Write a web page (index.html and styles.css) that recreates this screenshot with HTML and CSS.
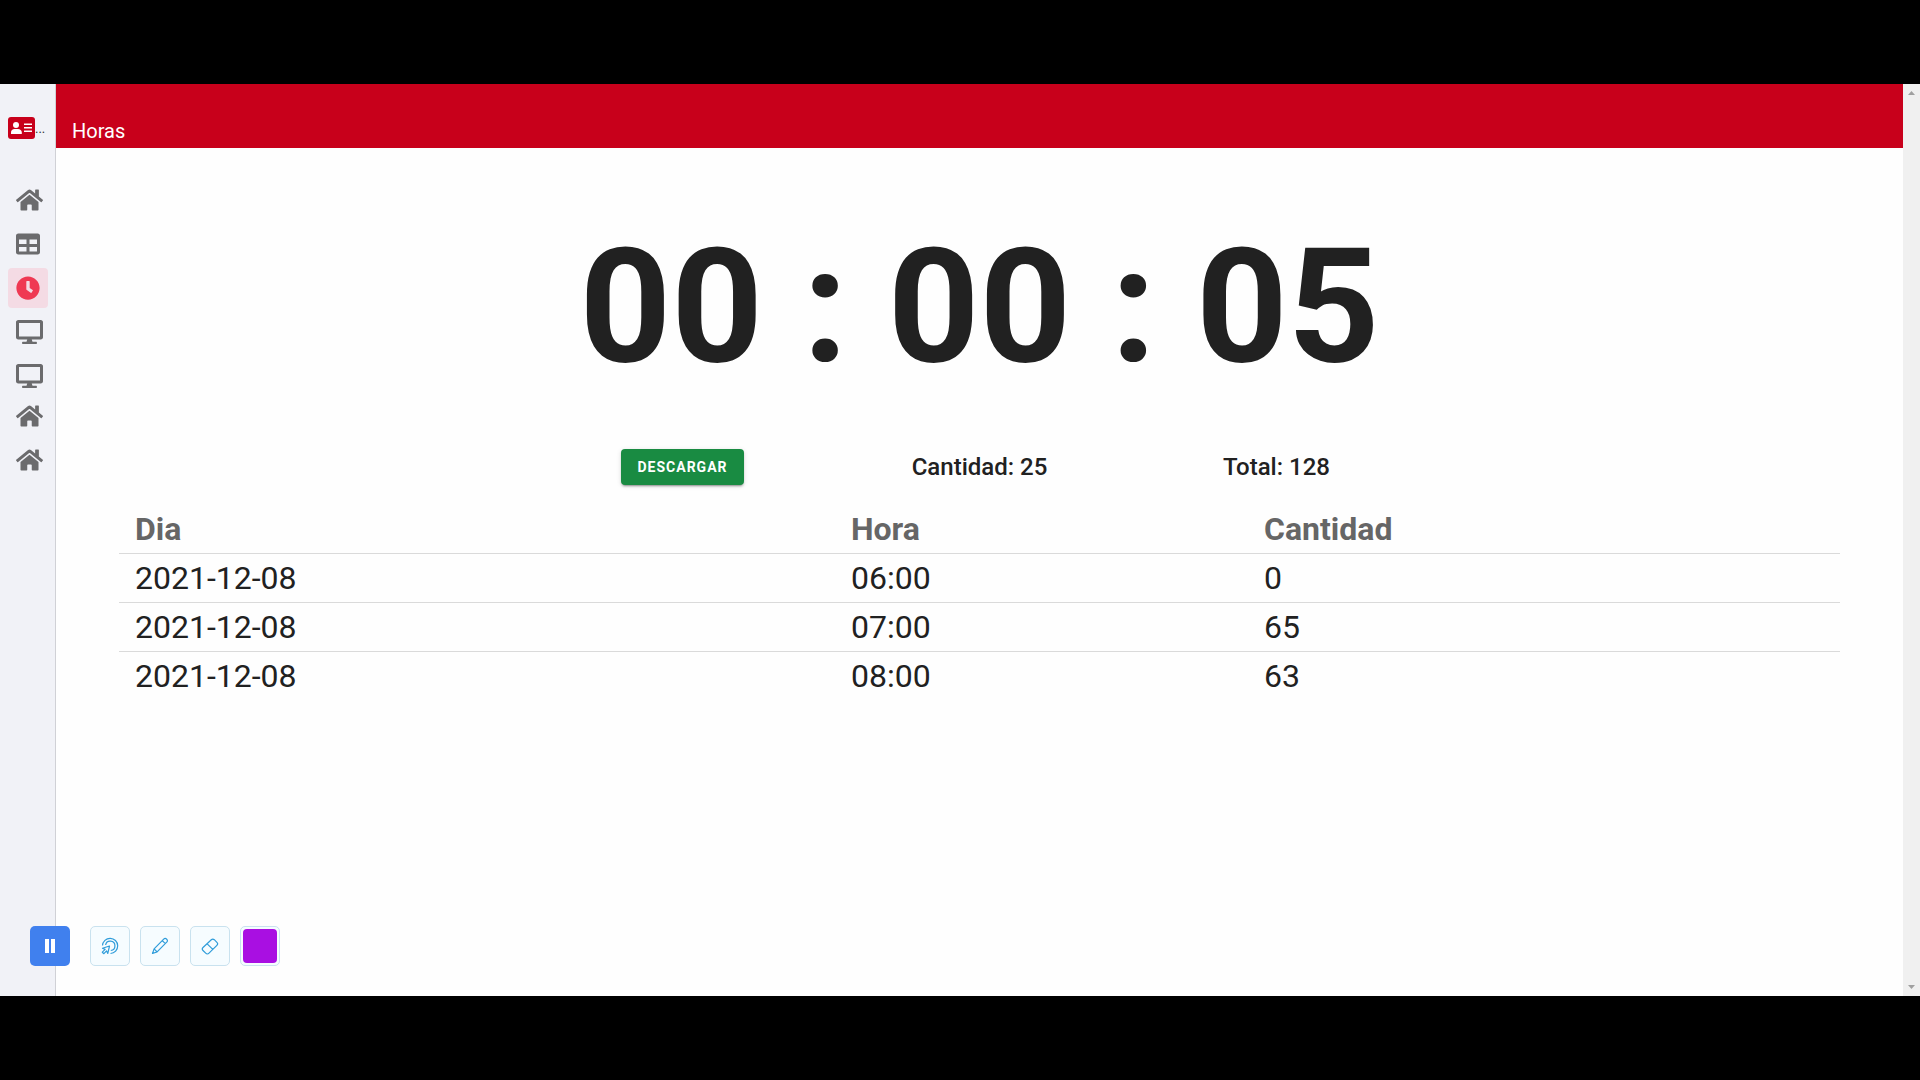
FILE: index.html
```html
<!DOCTYPE html>
<html lang="es">
<head>
<meta charset="utf-8">
<meta name="viewport" content="width=device-width, initial-scale=1">
<title>Horas</title>
<link rel="stylesheet" href="styles.css">
</head>
<body>
<svg class="sprite" aria-hidden="true">
  <symbol id="home" viewBox="0 0 576 512"><path d="M280.37 148.26L96 300.11V464a16 16 0 0 0 16 16l112.06-.29a16 16 0 0 0 15.92-16V368a16 16 0 0 1 16-16h64a16 16 0 0 1 16 16v95.64a16 16 0 0 0 16 16.05L464 480a16 16 0 0 0 16-16V300L295.67 148.26a12.19 12.19 0 0 0-15.3 0zM571.6 251.47L488 182.56V44.05a12 12 0 0 0-12-12h-56a12 12 0 0 0-12 12v72.61L318.47 43a48 48 0 0 0-61 0L4.34 251.47a12 12 0 0 0-1.6 16.9l25.5 31A12 12 0 0 0 45.15 301l235.22-193.74a12.19 12.19 0 0 1 15.3 0L530.9 301a12 12 0 0 0 16.9-1.6l25.5-31a12 12 0 0 0-1.7-16.93z"/></symbol>
  <symbol id="desktop" viewBox="0 0 576 512"><path d="M528 0H48C21.500 0 0 21.500 0 48v320c0 26.500 21.500 48 48 48h192l-16 48h-72c-13.300 0-24 10.700-24 24s10.700 24 24 24h272c13.300 0 24-10.700 24-24s-10.700-24-24-24h-72l-16-48h192c26.500 0 48-21.500 48-48V48c0-26.500-21.500-48-48-48zm-16 352H64V64h448v288z"/></symbol>
  <symbol id="grid" viewBox="0 0 512 512"><path fill-rule="evenodd" d="M464 32H48C21.500 32 0 53.500 0 80v352c0 26.500 21.500 48 48 48h416c26.500 0 48-21.500 48-48V80c0-26.500-21.500-48-48-48zM224 416H64v-96h160v96zm0-160H64v-96h160v96zm224 160H288v-96h160v96zm0-160H288v-96h160v96z"/></symbol>
  <symbol id="clock" viewBox="0 0 512 512"><path d="M256 8C119 8 8 119 8 256s111 248 248 248 248-111 248-248S393 8 256 8zm57.100 350.100L224.900 294c-3.100-2.300-4.900-5.900-4.900-9.700V116c0-6.600 5.400-12 12-12h48c6.600 0 12 5.400 12 12v137.700l63.500 46.200c5.400 3.900 6.500 11.400 2.600 16.800l-28.200 38.800c-3.900 5.300-11.400 6.500-16.800 2.600z"/></symbol>
</svg>
<div class="app">
  <aside class="sidebar">
    <a class="brand" href="#" aria-label="Inicio">
      <svg viewBox="0 0 27 22"><rect width="27" height="22" rx="3" fill="#c8001b"/><g fill="#fff"><circle cx="8" cy="8" r="3"/><path d="M3 17v-1.500c0-2 1.500-3.500 3.500-3.500h3.500c2 0 3.800 1.500 3.800 3.500V17z"/><path d="M16 6.500h8V8h-8zM16 10h8v1.500h-8zM16 13.500h8V15h-8z"/></g></svg>
      <span>...</span>
    </a>
    <nav class="menu">
      <div class="group">
        <a href="#" aria-label="Inicio"><svg class="wide"><use href="#home"/></svg></a>
        <a href="#" aria-label="Tabla"><svg><use href="#grid"/></svg></a>
        <a class="active" href="#" aria-label="Horas"><svg><use href="#clock"/></svg></a>
        <a href="#" aria-label="Monitor 1"><svg class="wide"><use href="#desktop"/></svg></a>
        <a href="#" aria-label="Monitor 2"><svg class="wide"><use href="#desktop"/></svg></a>
      </div>
      <div class="group">
        <a href="#" aria-label="Planta 1"><svg class="wide"><use href="#home"/></svg></a>
        <a href="#" aria-label="Planta 2"><svg class="wide"><use href="#home"/></svg></a>
      </div>
    </nav>
  </aside>
  <div class="main">
    <header class="topbar"><h1>Horas</h1></header>
    <main class="content">
      <div class="timer">00 : 00 : 05</div>
      <div class="summary">
        <div><button class="download" type="button">DESCARGAR</button></div>
        <div>Cantidad: 25</div>
        <div>Total: 128</div>
      </div>
      <table class="hours">
        <thead><tr><th class="day">Dia</th><th class="hour">Hora</th><th>Cantidad</th></tr></thead>
        <tbody>
          <tr><td>2021-12-08</td><td>06:00</td><td>0</td></tr>
          <tr><td>2021-12-08</td><td>07:00</td><td>65</td></tr>
          <tr><td>2021-12-08</td><td>08:00</td><td>63</td></tr>
        </tbody>
      </table>
    </main>
  </div>
  <div class="scrollbar">
    <svg viewBox="0 0 7 4"><path d="M0 4h7L3.500 0z"/></svg>
    <svg viewBox="0 0 7 4"><path d="M0 0h7L3.500 4z"/></svg>
  </div>
  <div class="recorder">
    <button class="pause" type="button" aria-label="Pausar"><svg viewBox="0 0 18 18"><path d="M4 2h4v14H4zM10 2h4v14h-4z" fill="#fff"/></svg></button>
    <button type="button" aria-label="Puntero"><svg viewBox="0 0 18 18"><path d="M1.500 8.500A7.600 7.600 0 1 1 9.500 16.500"/><path d="M4.600 8A4.700 4.700 0 1 1 9.800 13.500"/><path d="M8.500 9L1.500 11.200l2.600 1.200L1.300 15.200l1.600 1.500 2.700-2.800 1.200 2.500z"/></svg></button>
    <button type="button" aria-label="Lápiz"><svg viewBox="0 0 18 18"><path d="M1.500 16.500l1.600-4.600L12.700 2.200c1-1 2-.9 3 0s.9 2 0 3L6.100 14.900zM3.100 11.900l3 3M11.300 3.600l3 3"/></svg></button>
    <button type="button" aria-label="Borrador"><svg viewBox="0 0 18 18"><path d="M2 10.500L10.300 2.700c1-.9 2-.9 3 0l2.600 2.600c1 1 1 2 0 3L8 16.200c-1 1-2.300 1-3.300 0L2 13.500c-1-1-1-2 0-3zM6.200 6.800l5.600 5.600"/></svg></button>
    <button class="color" type="button" aria-label="Color"><span></span></button>
  </div>
</div>
</body>
</html>
```
FILE: styles.css
```css
* { box-sizing: border-box; }
body {
  margin: 0;
  min-height: 100vh;
  padding: 84px 0;
  display: flex;
  background: #000;
  color: #212121;
  font-family: Roboto, sans-serif;
}
button { padding: 0; border: 0; font: inherit; cursor: pointer; }
.sprite { position: absolute; width: 0; height: 0; }

.app {
  position: relative;
  flex: 1;
  display: flex;
  background: #fefefe;
}

.sidebar {
  width: 56px;
  flex: none;
  background: #f1f2f7;
  border-right: 1px solid #d0d1d6;
}
.brand {
  display: flex;
  align-items: center;
  height: 88px;
  padding-left: 8px;
  color: #333;
  font-size: 13px;
  text-decoration: none;
}
.brand svg { width: 27px; height: 22px; }
.menu a {
  display: flex;
  align-items: center;
  width: 40px;
  height: 40px;
  padding-left: 8px;
  border-radius: 4px;
  color: #6b6b6d;
}
.menu { padding: 8px 8px 0; }
.group { display: grid; gap: 4px; }
.menu svg { width: 24px; height: 24px; fill: currentColor; flex: none; }
.menu svg.wide { width: 27px; }
.menu a.active { background: #f4dbe4; color: #ef3953; }

.main { flex: 1; min-width: 0; }
.topbar {
  height: 64px;
  display: flex;
  align-items: flex-end;
  padding: 0 16px 5px;
  background: #c8001b;
  color: #fff;
}
.topbar h1 { margin: 0; font-size: 20px; line-height: 24px; font-weight: 400; }
.content { padding: 79px 63px 0; }
.timer {
  font-size: 160px;
  line-height: 160px;
  font-weight: 700;
  text-align: center;
}
.summary {
  display: grid;
  grid-template-columns: repeat(3, 297px);
  justify-content: center;
  align-items: center;
  margin-top: 62px;
  font-size: 24px;
  line-height: 36px;
  font-weight: 500;
  text-align: center;
}
.download {
  display: block;
  height: 36px;
  margin: 0 auto;
  padding: 0 16px;
  border-radius: 4px;
  background: #198b42;
  color: #fff;
  font-size: 14px;
  font-weight: 700;
  letter-spacing: 1px;
  box-shadow: 0 3px 1px -2px rgba(0,0,0,.2), 0 2px 2px rgba(0,0,0,.14), 0 1px 5px rgba(0,0,0,.12);
}

.hours {
  width: 100%;
  margin-top: 20px;
  border-collapse: separate;
  border-spacing: 0;
  table-layout: fixed;
  font-size: 32px;
  line-height: 48px;
}
.hours th, .hours td {
  height: 49px;
  padding: 0 16px;
  border-bottom: 1px solid #dadada;
  text-align: left;
  vertical-align: top;
}
.hours th { color: #666; font-weight: 700; }
.hours tbody tr:last-child td { border-bottom: 0; }
.day { width: 41.6%; }
.hour { width: 24%; }

.scrollbar {
  width: 17px;
  flex: none;
  display: flex;
  flex-direction: column;
  justify-content: space-between;
  align-items: center;
  padding: 7px 0;
  background: #f0f0f0;
}
.scrollbar svg { width: 7px; height: 4px; fill: #a0a0a0; }

.recorder {
  position: absolute;
  left: 30px;
  bottom: 30px;
  display: flex;
  gap: 10px;
}
.recorder button {
  display: grid;
  place-items: center;
  width: 40px;
  height: 40px;
  border: 1px solid #c9e2ef;
  border-radius: 5px;
  background: #f6fcff;
}
.recorder svg { width: 18px; height: 18px; fill: none; stroke: #2f9cda; stroke-width: 1.2; stroke-linejoin: round; }
.recorder .pause { margin-right: 10px; border: 0; background: #4080ee; }
.recorder .pause svg { stroke: none; }
.recorder .color span { width: 34px; height: 34px; border-radius: 4px; background: #a90fe2; }
```
